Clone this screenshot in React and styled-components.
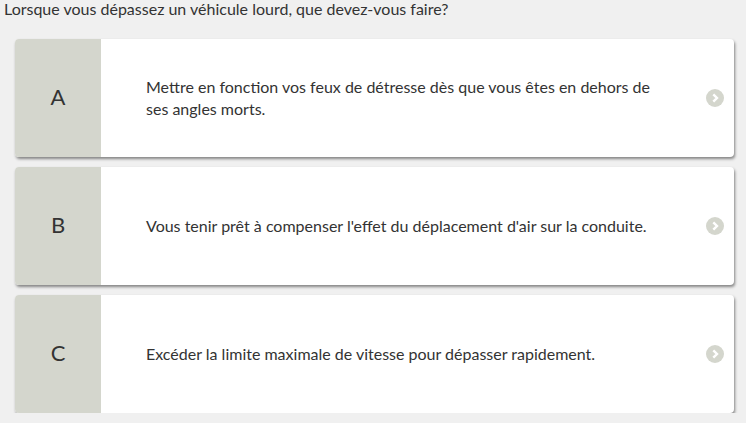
import React from 'react';
import styled, { createGlobalStyle } from 'styled-components';

const GlobalStyle = createGlobalStyle`
  html, body {
    margin: 0;
    padding: 0;
    background: #f0f0f0;
  }
  body {
    font-family: Lato, "Open Sans", sans-serif;
    color: #333;
  }
`;

const answers = [
  {
    letter: 'A',
    text: 'Mettre en fonction vos feux de détresse dès que vous êtes en dehors de ses angles morts.',
  },
  {
    letter: 'B',
    text: "Vous tenir prêt à compenser l'effet du déplacement d'air sur la conduite.",
  },
  {
    letter: 'C',
    text: 'Excéder la limite maximale de vitesse pour dépasser rapidement.',
  },
];

const App = () => (
  <Page>
    <GlobalStyle />
    <Question>Lorsque vous dépassez un véhicule lourd, que devez-vous faire?</Question>
    <AnswerList>
      {answers.map((a) => (
        <Answer key={a.letter}>
          <Letter>{a.letter}</Letter>
          <AnswerText>{a.text}</AnswerText>
          <Arrow>
            <svg width="18" height="18" viewBox="0 0 18 18">
              <circle cx="9" cy="9" r="9" fill="#d4d6cd" />
              <path d="M7.3 5.3 L11 9 L7.3 12.7" fill="none" stroke="#fff" strokeWidth="2.4" />
            </svg>
          </Arrow>
        </Answer>
      ))}
    </AnswerList>
  </Page>
);

const Page = styled.div`
  padding: 0 12px 0 15px;
`;

const Question = styled.div`
  font-size: 16px;
  line-height: 18px;
  margin-left: -11px;
`;

const AnswerList = styled.div`
  display: flex;
  flex-direction: column;
  gap: 10px;
  margin-top: 21px;
`;

const Answer = styled.div`
  display: flex;
  align-items: center;
  height: 118px;
  background: #fff;
  border-radius: 4px;
  overflow: hidden;
  box-shadow: 1px 2px 3px rgba(0, 0, 0, 0.45);
`;

const Letter = styled.div`
  width: 86px;
  align-self: stretch;
  display: flex;
  align-items: center;
  justify-content: center;
  padding-bottom: 4px;
  box-sizing: border-box;
  background: #d4d6cd;
  font-size: 22px;
  color: #333;
`;

const AnswerText = styled.div`
  width: 520px;
  margin-left: 45px;
  font-size: 16px;
  line-height: 22px;
`;

const Arrow = styled.div`
  margin-left: auto;
  margin-right: 10px;
  display: flex;
`;

export default App;
